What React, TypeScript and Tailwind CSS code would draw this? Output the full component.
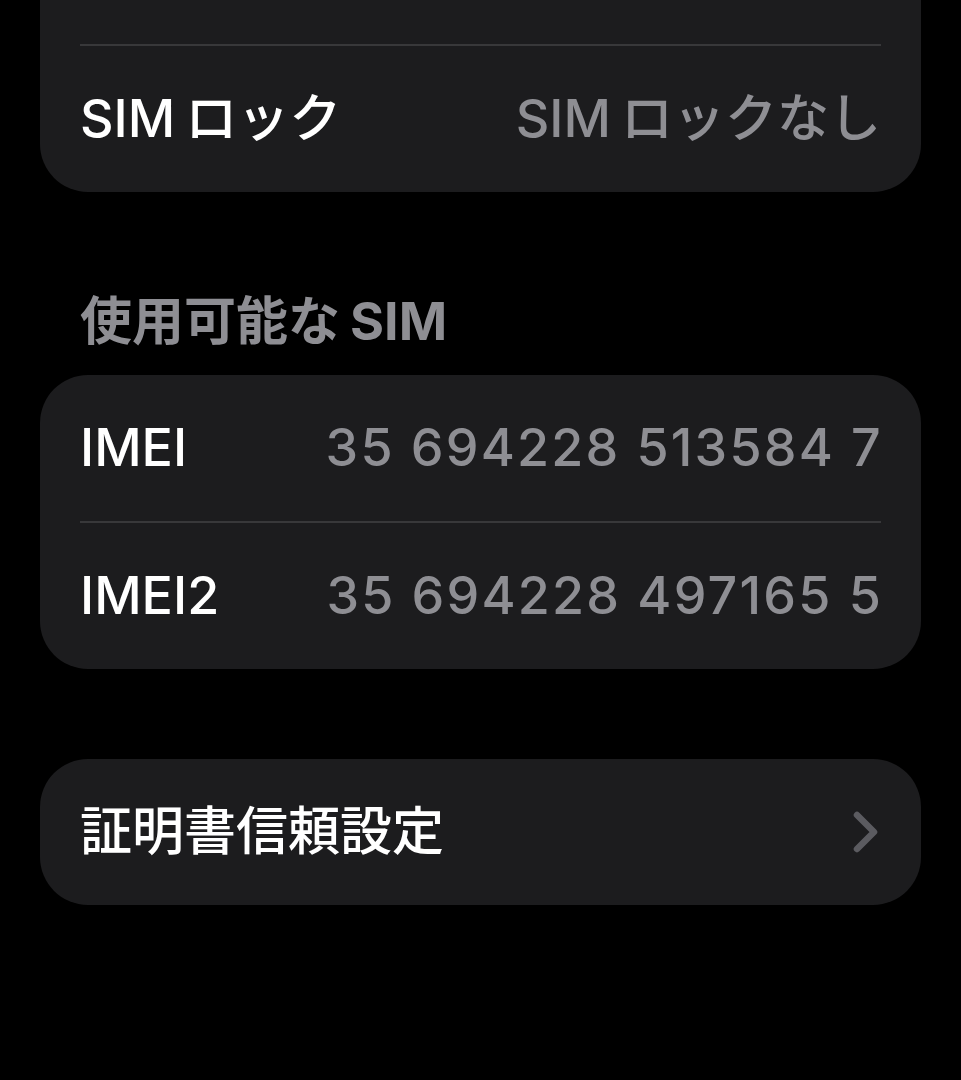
import { Fragment, ReactNode } from "react";

type Row = {
    label: ReactNode;
    value?: ReactNode;
    mono?: boolean;
    chevron?: boolean;
};

const font = { fontFamily: "Inter, 'Noto Sans CJK JP', sans-serif" };

function Chevron() {
    return (
        <svg width="30" height="42" viewBox="0 0 30 42" fill="none">
            <path d="M6 4 L23 21 L6 38" stroke="#5b5b60" strokeWidth="6.5" strokeLinecap="round" strokeLinejoin="round" />
        </svg>
    );
}

function Card({ rows, className = "" }: { rows: Row[]; className?: string }) {
    return (
        <div className={`bg-[#1c1c1e] rounded-[48px] mx-10 ${className}`}>
            {rows.map((row, i) => (
                <Fragment key={i}>
                    {i > 0 && <div className="mx-10 h-[2px] bg-[#38383a]" />}
                    <div className="flex items-center justify-between h-[146px] px-10">
                        <span className="text-white text-[52px] leading-none font-medium">{row.label}</span>
                        {row.value && (
                            <span
                                className={`text-[#8e8e93] text-[52px] leading-none font-medium ${row.mono ? "tracking-[2.2px] -mr-[2px]" : ""}`}
                            >
                                {row.value}
                            </span>
                        )}
                        {row.chevron && <Chevron />}
                    </div>
                </Fragment>
            ))}
        </div>
    );
}

export default function App() {
    return (
        <div className="bg-black min-h-[1080px] w-full overflow-hidden" style={font}>
            {/* top card, first row scrolled off */}
            <Card
                className="-mt-[102px]"
                rows={[
                    { label: "" },
                    {
                        label: <>SIM<span className="ml-[10px]">ロック</span></>,
                        value: <>SIM<span className="ml-[10px]">ロックなし</span></>,
                    },
                ]}
            />

            {/* section header */}
            <div className="px-20 pt-[100px] pb-[23px]">
                <h2 className="text-[#8e8e93] text-[52px] leading-[60px] font-bold">
                    使用可能な<span className="ml-[10px]">SIM</span>
                </h2>
            </div>

            <Card
                rows={[
                    { label: "IMEI", value: "35 694228 513584 7", mono: true },
                    { label: "IMEI2", value: "35 694228 497165 5", mono: true },
                ]}
            />

            <Card className="mt-[90px]" rows={[{ label: "証明書信頼設定", chevron: true }]} />
        </div>
    );
}
